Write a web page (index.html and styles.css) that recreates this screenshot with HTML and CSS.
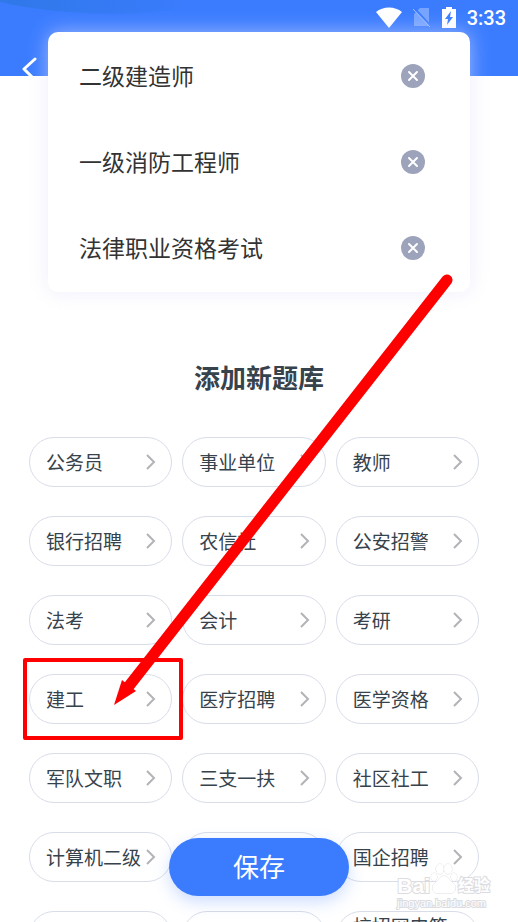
FILE: index.html
```html
<!DOCTYPE html>
<html lang="zh-CN">
<head>
  <meta charset="UTF-8" />
  <meta name="viewport" content="width=device-width, initial-scale=1" />
  <title>添加新题库</title>
  <link rel="stylesheet" href="styles.css">
</head>
<body>

  <header class="top-bar">
    <svg class="top-curve" viewBox="0 0 200 14" preserveAspectRatio="none" aria-hidden="true">
      <linearGradient id="curve">
        <stop offset="0" stop-color="#2f78e8" />
        <stop offset="1" stop-color="#3b7cff" />
      </linearGradient>
      <path d="M0 0H200C180 10 145 14 104 14C62 13 24 8 0 2Z" fill="url(#curve)" />
    </svg>
    <div class="status">
      <svg width="26" height="21" viewBox="0 0 26 21" aria-hidden="true">
        <path d="M0 5C7 -1 19 -1 26 5L13 21Z" fill="#fff" />
      </svg>
      <svg width="18" height="21" viewBox="0 0 18 21" aria-hidden="true">
        <path d="M7 1H16V19H1V7Z" fill="#76a4ff" />
        <path d="M1 1L18 19" stroke="#3b7cff" stroke-width="2" />
        <path d="M0 2L17 20" stroke="#9dbdff" />
      </svg>
      <svg width="14" height="21" viewBox="0 0 14 21" aria-hidden="true">
        <path d="M4 0H10V2H14V21H0V2H4Z" fill="#fff" />
        <path d="M9 4L3 12H6L5 18L11 10H8Z" fill="#3b7cff" />
      </svg>
      <span>3:33</span>
    </div>
    <a href="#" class="back" aria-label="返回">
      <svg width="16" height="24" viewBox="0 0 16 24" aria-hidden="true">
        <path d="M13 2L2 12L13 23" fill="none" stroke="#fff" stroke-width="3" stroke-linecap="round" stroke-linejoin="round" />
      </svg>
    </a>
  </header>

  <main>
    <ul class="chosen" id="chosen"></ul>
    <h1>添加新题库</h1>
    <div class="bank-grid" id="banks"></div>
  </main>

  <button type="button" class="save">保存</button>

  <svg class="marks" width="518" height="922" viewBox="0 0 518 922" aria-hidden="true">
    <rect x="25" y="660" width="156" height="78" fill="none" stroke="#f00" stroke-width="4" stroke-linejoin="round" />
    <path d="M447 280L129 686" stroke="#f00" stroke-width="11" stroke-linecap="round" />
    <path d="M114 705L122 680L136 691Z" fill="#f00" />
  </svg>

  <div class="watermark">
    <div class="wm-logo">
      <span>Bai</span>
      <svg width="28" height="32" viewBox="0 0 28 32" aria-hidden="true">
        <g fill="#fff" stroke="#dedee2">
          <ellipse cx="4" cy="14" rx="3" ry="4" />
          <ellipse cx="10" cy="6" rx="4" ry="5" />
          <ellipse cx="18" cy="6" rx="4" ry="5" />
          <ellipse cx="24" cy="14" rx="3" ry="4" />
          <path d="M14 13C10 13 9 17 5 20C0 24 3 31 8 30H20C25 31 28 24 23 20C19 17 18 13 14 13Z" />
        </g>
        <text x="14" y="27" text-anchor="middle" class="wm-du">du</text>
      </svg>
      <span class="wm-cn">经验</span>
    </div>
    <div class="wm-url">jingyan.baidu.com</div>
  </div>

  <script>
    const chosen = ['二级建造师', '一级消防工程师', '法律职业资格考试'];
    const banks = [
      '公务员', '事业单位', '教师',
      '银行招聘', '农信社', '公安招警',
      '法考', '会计', '考研',
      '建工', '医疗招聘', '医学资格',
      '军队文职', '三支一扶', '社区社工',
      '计算机二级', '', '国企招聘',
      '', '', '校招网申笔试'
    ];

    document.getElementById('chosen').innerHTML = chosen.map(name => `
      <li>
        <span>${name}</span>
        <button type="button" class="remove" aria-label="删除${name}">
          <svg width="24" height="24" viewBox="0 0 24 24">
            <circle cx="12" cy="12" r="12" fill="#9da3ba" />
            <path d="M8 8L16 16M16 8L8 16" stroke="#fff" stroke-width="2" stroke-linecap="round" />
          </svg>
        </button>
      </li>`).join('');

    document.getElementById('banks').innerHTML = banks.map(name => `
      <button type="button" class="bank" aria-label="${name || '题库'}">
        <span>${name}</span>
        <svg width="10" height="16" viewBox="0 0 10 16">
          <path d="M1 1L8 8L1 15" fill="none" stroke="#b1b3b8" stroke-width="2" />
        </svg>
      </button>`).join('');
  </script>
</body>
</html>
```
FILE: styles.css
```css
* {
  margin: 0;
  padding: 0;
  box-sizing: border-box;
}

body {
  position: relative;
  height: 100vh;
  overflow: hidden;
  background: #fff;
  color: #333;
  font-family: "Noto Sans CJK SC", sans-serif;
}

button {
  border: none;
  background: none;
  font-family: inherit;
  color: inherit;
  cursor: pointer;
}

svg {
  display: block;
  flex-shrink: 0;
}

/* === Top bar === */
.top-bar {
  position: relative;
  height: 76px;
  padding: 7px 12px 0 22px;
  background: #3b7cff;
  overflow: hidden;
}

.top-curve {
  position: absolute;
  top: 0;
  left: 0;
  width: 40%;
  height: 14px;
}

.status {
  position: relative;
  display: flex;
  justify-content: flex-end;
  align-items: center;
  gap: 11px;
  height: 21px;
  color: #fff;
  font-family: Roboto, sans-serif;
  font-size: 20px;
  font-weight: 500;
}

.back {
  display: block;
  width: 16px;
  margin-top: 29px;
}

/* === Chosen banks === */
main {
  position: relative;
  margin-top: -44px;
}

.chosen {
  margin: 0 48px;
  padding: 1px 0;
  list-style: none;
  background: #fff;
  border-radius: 10px;
  box-shadow: 0 0 20px rgba(225, 225, 250, 0.6);
}

.chosen li {
  display: flex;
  justify-content: space-between;
  align-items: center;
  height: 86px;
  padding: 0 45px 0 31px;
  font-size: 23px;
}

.chosen span {
  padding-bottom: 3px;
}

.remove {
  width: 24px;
  height: 24px;
}

h1 {
  margin-top: 65px;
  line-height: 40px;
  text-align: center;
  font-size: 26px;
  font-weight: 700;
  color: #37434c;
}

/* === Bank grid === */
.bank-grid {
  display: grid;
  grid-template-columns: repeat(3, 1fr);
  gap: 29px 10px;
  margin-top: 40px;
  padding: 0 39px 0 29px;
}

.bank {
  display: flex;
  justify-content: space-between;
  align-items: center;
  height: 50px;
  padding: 0 15px 0 16px;
  border: 1px solid #d8dde9;
  border-radius: 25px;
  background: #fff;
  color: #37434c;
  font-size: 19px;
  line-height: 20px;
  text-align: left;
}

.save {
  position: absolute;
  bottom: 26px;
  left: 50%;
  width: 180px;
  height: 58px;
  margin-left: -90px;
  padding-bottom: 3px;
  border-radius: 29px;
  background: #3b7cff;
  box-shadow: 0 6px 16px rgba(59, 124, 255, 0.25);
  color: #fff;
  font-size: 26px;
}

/* === Marks over the page === */
.marks {
  position: absolute;
  top: 0;
  left: 0;
  pointer-events: none;
}

.watermark {
  position: absolute;
  right: 28px;
  bottom: 11px;
  color: #fff;
  -webkit-text-stroke: 2px #dcdce0;
  paint-order: stroke fill;
  font-family: "Liberation Sans", "Noto Sans CJK SC", sans-serif;
  pointer-events: none;
}

.wm-logo {
  display: flex;
  align-items: flex-end;
  font-size: 21px;
  font-weight: bold;
  line-height: 18px;
}

.wm-cn {
  font-size: 16px;
}

.wm-du {
  font-size: 13px;
  fill: #fff;
}

.wm-url {
  font-size: 11px;
  line-height: 16px;
}
```
